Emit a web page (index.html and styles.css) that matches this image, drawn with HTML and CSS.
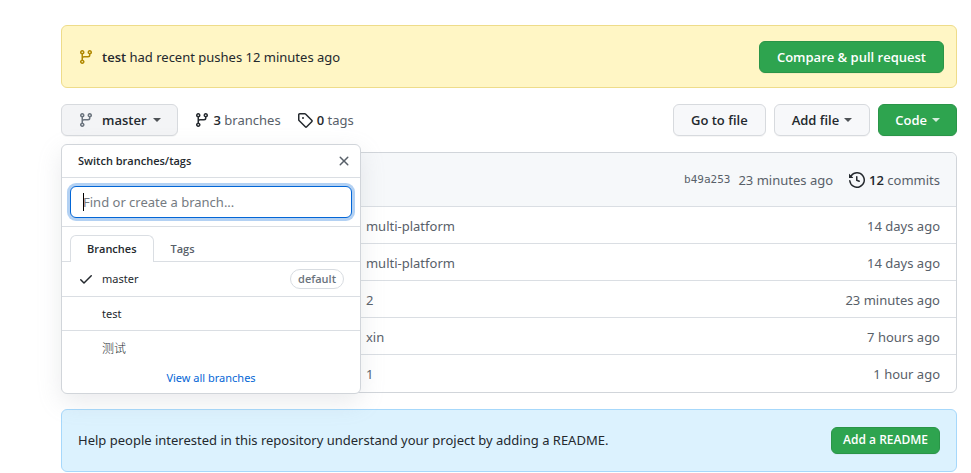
FILE: index.html
```html
<!DOCTYPE html>
<html lang="en">
<head>
<meta charset="utf-8">
<title>Repository</title>
<link rel="stylesheet" href="styles.css">
</head>
<body>
<svg class="sprite" aria-hidden="true">
  <symbol id="branch" viewBox="0 0 16 16"><path fill-rule="evenodd" d="M11.75 2.5a.75.75 0 100 1.5.75.75 0 000-1.5zm-2.25.75a2.25 2.25 0 113 2.122V6A2.5 2.5 0 0110 8.5H6a1 1 0 00-1 1v1.128a2.251 2.251 0 11-1.5 0V5.372a2.25 2.25 0 111.5 0v1.836A2.492 2.492 0 016 7h4a1 1 0 001-1v-.628A2.25 2.25 0 019.5 3.25zM4.25 12a.75.75 0 100 1.5.75.75 0 000-1.5zM3.5 3.25a.75.75 0 111.5 0 .75.75 0 01-1.5 0z"/></symbol>
  <symbol id="tag" viewBox="0 0 16 16"><path fill-rule="evenodd" d="M2.5 7.775V2.75a.25.25 0 01.25-.25h5.025a.25.25 0 01.177.073l6.25 6.25a.25.25 0 010 .354l-5.025 5.025a.25.25 0 01-.354 0l-6.25-6.25a.25.25 0 01-.073-.177zm-1.5 0V2.75C1 1.784 1.784 1 2.75 1h5.025c.464 0 .91.184 1.238.513l6.25 6.25a1.75 1.75 0 010 2.474l-5.026 5.026a1.75 1.75 0 01-2.474 0l-6.25-6.25A1.75 1.75 0 011 7.775zM6 5a1 1 0 100 2 1 1 0 000-2z"/></symbol>
  <symbol id="history" viewBox="0 0 16 16"><path fill-rule="evenodd" d="M1.643 3.143L.427 1.927A.25.25 0 000 2.104V5.75c0 .138.112.25.25.25h3.646a.25.25 0 00.177-.427L2.715 4.215a6.5 6.5 0 11-1.18 4.458.75.75 0 10-1.493.154 8.001 8.001 0 101.6-5.684zM7.75 4a.75.75 0 01.75.75v2.992l2.028.812a.75.75 0 01-.557 1.392l-2.5-1A.75.75 0 017 8.25v-3.5A.75.75 0 017.75 4z"/></symbol>
  <symbol id="check" viewBox="0 0 16 16"><path fill-rule="evenodd" d="M13.78 4.22a.75.75 0 010 1.06l-7.25 7.25a.75.75 0 01-1.06 0L2.22 9.28a.75.75 0 011.06-1.06L6 10.94l6.72-6.72a.75.75 0 011.06 0z"/></symbol>
  <symbol id="close" viewBox="0 0 16 16"><path fill-rule="evenodd" d="M3.72 3.72a.75.75 0 011.06 0L8 6.94l3.22-3.22a.75.75 0 111.06 1.06L9.06 8l3.22 3.22a.75.75 0 11-1.06 1.06L8 9.06l-3.22 3.22a.75.75 0 01-1.06-1.06L6.94 8 3.72 4.78a.75.75 0 010-1.06z"/></symbol>
</svg>
<main class="page">
  <section class="flash flash-warn">
    <svg class="icon"><use href="#branch"/></svg>
    <p class="flash-text"><strong>test</strong> had recent pushes 12 minutes ago</p>
    <button class="btn btn-primary" type="button">Compare &amp; pull request</button>
  </section>

  <div class="toolbar">
    <div class="picker">
      <button class="btn btn-branch" type="button"><svg class="icon"><use href="#branch"/></svg>master<span class="caret"></span></button>
      <div class="menu">
        <header class="menu-header">
          <span>Switch branches/tags</span>
          <button class="close" type="button" aria-label="Close"><svg class="icon"><use href="#close"/></svg></button>
        </header>
        <div class="filter">
          <input class="filter-input" type="text" placeholder="Find or create a branch..." aria-label="Find or create a branch">
        </div>
        <div class="tabs">
          <button class="tab tab-active" type="button">Branches</button>
          <button class="tab" type="button">Tags</button>
        </div>
        <a class="item" href="#"><svg class="icon"><use href="#check"/></svg><span class="item-name">master</span><span class="label">default</span></a>
        <a class="item" href="#"><span class="item-name">test</span></a>
        <a class="item" href="#"><span class="item-name" lang="zh">测试</span></a>
        <a class="view-all" href="#">View all branches</a>
      </div>
    </div>
    <a class="stat" href="#"><svg class="icon"><use href="#branch"/></svg><span><strong>3</strong> branches</span></a>
    <a class="stat" href="#"><svg class="icon"><use href="#tag"/></svg><span><strong>0</strong> tags</span></a>
    <div class="actions">
      <button class="btn" type="button">Go to file</button>
      <button class="btn" type="button">Add file<span class="caret"></span></button>
      <button class="btn btn-primary" type="button">Code<span class="caret"></span></button>
    </div>
  </div>

  <section class="box">
    <div class="box-header">
      <a class="sha" href="#">b49a253</a>
      <span>23 minutes ago</span>
      <a class="stat commits" href="#"><svg class="icon"><use href="#history"/></svg><span><strong>12</strong> commits</span></a>
    </div>
    <table class="files">
      <tr><td class="message">multi-platform</td><td class="age">14 days ago</td></tr>
      <tr><td class="message">multi-platform</td><td class="age">14 days ago</td></tr>
      <tr><td class="message">2</td><td class="age">23 minutes ago</td></tr>
      <tr><td class="message">xin</td><td class="age">7 hours ago</td></tr>
      <tr><td class="message">1</td><td class="age">1 hour ago</td></tr>
    </table>
  </section>

  <section class="flash flash-info">
    <p class="flash-text">Help people interested in this repository understand your project by adding a README.</p>
    <button class="btn btn-primary btn-small" type="button">Add a README</button>
  </section>
</main>
</body>
</html>
```
FILE: styles.css
```css
* { box-sizing: border-box; }

body {
  margin: 0;
  background: #fff;
  color: #24292e;
  font: 13px/20px "Noto Sans", "Noto Sans CJK SC", sans-serif;
  overflow: hidden;
}

strong { font-family: "Open Sans", sans-serif; font-weight: 600; }
a { color: inherit; text-decoration: none; }
.sprite { display: none; }
.icon { flex: none; width: 16px; height: 16px; fill: currentColor; }

.page {
  display: flex;
  flex-direction: column;
  gap: 16px;
  padding: 25px 14px 0 61px;
}

.flash {
  display: flex;
  align-items: center;
  gap: 8px;
  min-height: 63px;
  padding: 0 12px 0 16px;
  border: 1px solid;
  border-radius: 6px;
}
.flash-warn { background: #fff6c5; border-color: #eedc8a; }
.flash-warn .icon { color: #b08800; }
.flash-info { background: #dcf2fe; border-color: #a6d8fb; padding-right: 16px; }
.flash-text { flex: 1; margin: 0; }

.btn {
  display: inline-flex;
  align-items: center;
  gap: 5px;
  height: 32px;
  padding: 0 17px;
  border: 1px solid #d7dade;
  border-radius: 6px;
  background: #f7f8fa;
  box-shadow: 0 1px 0 rgba(27, 31, 35, .04);
  color: #24292e;
  font: 600 13px/20px "Open Sans", sans-serif;
  white-space: nowrap;
}
.btn-primary { padding: 0 16px; background: #2ea44f; border-color: #2a9548; color: #fff; }
.flash-warn .btn { padding: 0 17px; }
.btn-branch { padding: 0 16px; background: #f3f4f6; gap: 8px; }
.btn-branch .icon { color: #6a737d; }
.btn-branch .caret { margin-left: -2px; }
.btn-small { height: 27px; padding: 0 11px; font-size: 12px; }
.caret {
  border: 4px solid transparent;
  border-top-color: currentColor;
  border-bottom-width: 0;
  opacity: .8;
}

.toolbar { display: flex; align-items: center; gap: 16px; }
.picker { position: relative; }
.stat { display: flex; align-items: center; gap: 4px; color: #586069; }
.stat .icon, .stat strong { color: #24292e; }
.actions { display: flex; gap: 8px; margin-left: auto; }

.menu {
  position: absolute;
  top: 40px;
  left: 0;
  z-index: 2;
  width: 300px;
  border: 1px solid #d1d5da;
  border-radius: 6px;
  background: #fff;
  box-shadow: 0 8px 24px rgba(149, 157, 165, .2);
  font-size: 11px;
}
.menu-header {
  display: flex;
  align-items: center;
  justify-content: space-between;
  height: 33px;
  padding: 0 8px 0 16px;
  border-bottom: 1px solid #dadee3;
  font-family: "Open Sans", sans-serif;
  font-weight: 600;
}
.close { display: flex; padding: 0; border: 0; background: none; color: #586069; }
.filter {
  position: relative;
  padding: 8px;
  border-bottom: 1px solid #dadee3;
}
.filter-input {
  display: block;
  width: 100%;
  height: 32px;
  padding: 0 12px;
  border: 1px solid #0366d6;
  border-radius: 6px;
  outline: 0;
  box-shadow: 0 0 0 3px rgba(3, 102, 214, .3);
  font: 13px/20px "Noto Sans", sans-serif;
}
.filter-input::placeholder { color: #757b82; opacity: 1; }
.filter::before {
  content: "";
  position: absolute;
  top: 15px;
  left: 21px;
  width: 1px;
  height: 18px;
  background: #000;
}
.tabs { display: flex; padding: 8px 8px 0; border-bottom: 1px solid #dadee3; }
.tab {
  height: 27px;
  margin-bottom: -1px;
  padding: 0 16px;
  border: 1px solid transparent;
  border-bottom: 0;
  border-radius: 6px 6px 0 0;
  background: none;
  color: #586069;
  font: 600 11px/18px "Open Sans", sans-serif;
}
.tab-active { border-color: #dadee3; background: #fff; color: #24292e; }
.item {
  display: flex;
  align-items: center;
  gap: 8px;
  min-height: 34px;
  padding: 0 16px;
}
.item + .item { border-top: 1px solid #dadee3; }
.item-name { flex: 1; }
.item-name:first-child { margin-left: 24px; }
.item-name:lang(zh) { font-family: "Noto Sans CJK SC", sans-serif; font-size: 12px; font-weight: 300; }
.label {
  padding: 0 7px;
  border: 1px solid #d8dce1;
  border-radius: 10px;
  color: #6a737d;
  font-family: "Open Sans", sans-serif;
  font-weight: 600;
  line-height: 18px;
}
.view-all { display: block; padding: 4px 0 5px; color: #0366d6; text-align: center; }

.box { border: 1px solid #d1d5da; border-radius: 6px; color: #586069; }
.box-header {
  display: flex;
  align-items: center;
  justify-content: flex-end;
  gap: 8px;
  min-height: 53px;
  padding: 0 16px;
  border-radius: 6px 6px 0 0;
  background: #f6f8fa;
}
.sha { font: 11px/20px "DejaVu Sans Mono", monospace; }
.commits { margin-left: 8px; }
.files { width: 100%; border-collapse: collapse; }
.files td { height: 37px; padding: 2px 16px 0; border-top: 1px solid #dadee3; }
.files .message { width: 65%; padding-left: 34%; }
.age { text-align: right; }
```
